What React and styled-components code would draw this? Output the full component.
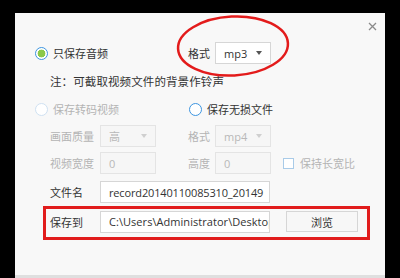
import styled, { createGlobalStyle } from 'styled-components';

const GlobalStyle = createGlobalStyle`
  html, body {
    margin: 0;
    padding: 0;
    background: #000;
    overflow: hidden;
  }
  body {
    font-family: "Noto Sans CJK SC", "Noto Sans", sans-serif;
    font-size: 11px;
    color: #333;
  }
`;

export default function App() {
  return (
    <>
      <GlobalStyle />
      <Stage>
        <Panel>
          <CloseButton>
            <svg width="9" height="9" viewBox="0 0 9 9">
              <path d="M1 1 L8 8 M8 1 L1 8" stroke="#8a8a8a" strokeWidth="1.3" />
            </svg>
          </CloseButton>

          <Ellipse width="116" height="64" viewBox="0 0 116 64">
            <ellipse
              cx="58"
              cy="32"
              rx="55"
              ry="29.5"
              transform="rotate(-3 58 32)"
              fill="none"
              stroke="#e31b1b"
              strokeWidth="2.5"
            />
          </Ellipse>

          <Body>
            <Row $top={0} $h={22}>
              <Lead $w={153}>
                <Radio $checked />
                <RadioLabel>只保存音频</RadioLabel>
              </Lead>
              <Cell $w={27}>格式</Cell>
              <Select $w={56}>
                mp3 <Arrow />
              </Select>
            </Row>

            <SubRow $top={7} $h={20}>
              <Note>注：可截取视频文件的背景作铃声</Note>
            </SubRow>

            <Row $top={8} $h={20}>
              <Lead $w={154}>
                <Radio $disabled />
                <RadioLabel $disabled>保存转码视频</RadioLabel>
              </Lead>
              <Radio />
              <RadioLabel>保存无损文件</RadioLabel>
            </Row>

            <SubRow $top={6} $h={22}>
              <Cell $w={50} $disabled>画面质量</Cell>
              <Select $w={56} $disabled>
                高 <Arrow $disabled />
              </Select>
              <Cell $w={27} $gap={32} $disabled>格式</Cell>
              <Select $w={56} $disabled>
                mp4 <Arrow $disabled />
              </Select>
            </SubRow>

            <SubRow $top={5} $h={22}>
              <Cell $w={50} $disabled>视频宽度</Cell>
              <Input $w={56} $disabled>0</Input>
              <Cell $w={27} $gap={32} $disabled>高度</Cell>
              <Input $w={56} $disabled>0</Input>
              <CheckBox />
              <Cell $disabled>保持长宽比</Cell>
            </SubRow>

            <SubRow $top={7} $h={22}>
              <Cell $w={50}>文件名</Cell>
              <Input $w={170} $spacing={-0.15}>record20140110085310_20149</Input>
            </SubRow>

            <Highlight>
              <Row $top={0} $h={21}>
                <Cell $w={50}>保存到</Cell>
                <Input $w={170} $spacing={0.05}>C:\Users\Administrator\Desktop</Input>
                <Button>浏览</Button>
              </Row>
            </Highlight>
          </Body>

          <Footer />
        </Panel>
      </Stage>
    </>
  );
}

const Stage = styled.div`
  width: 400px;
  height: 278px;
  padding: 13px 0 0 15px;
  box-sizing: border-box;
`;

const Panel = styled.div`
  position: relative;
  width: 370px;
  height: 270px;
  background: #f8f8f8;
  display: flex;
  flex-direction: column;
`;

const CloseButton = styled.div`
  position: absolute;
  top: 9px;
  right: 8px;
  width: 9px;
  height: 9px;
  display: flex;
`;

const Ellipse = styled.svg`
  position: absolute;
  left: 160px;
  top: 1px;
  pointer-events: none;
`;

const Body = styled.div`
  flex: 1;
  display: flex;
  flex-direction: column;
  padding: 29px 0 0 20px;
`;

const Row = styled.div`
  display: flex;
  align-items: center;
  flex: none;
  height: ${({ $h }) => $h}px;
  margin-top: ${({ $top }) => $top}px;
  white-space: nowrap;
`;

const SubRow = styled(Row)`
  padding-left: 15px;
`;

const Lead = styled.div`
  width: ${({ $w }) => $w}px;
  flex: none;
  display: flex;
  align-items: center;
`;

const Radio = styled.span`
  box-sizing: border-box;
  width: 13px;
  height: 13px;
  border-radius: 50%;
  flex: none;
  border: 1.5px solid ${({ $disabled }) => ($disabled ? '#cfe1f2' : '#3d95e0')};
  background: ${({ $checked }) =>
    $checked ? 'radial-gradient(circle, #8bc84a 0 3.6px, #fff 4.2px)' : '#fff'};
`;

const RadioLabel = styled.span`
  margin-left: 5px;
  color: ${({ $disabled }) => ($disabled ? '#b4b4b4' : '#333')};
`;

const Note = styled.span`
  font-size: 11.5px;
  letter-spacing: 0.1px;
`;

const Cell = styled.span`
  flex: none;
  width: ${({ $w }) => ($w ? `${$w}px` : 'auto')};
  margin-left: ${({ $gap }) => $gap || 0}px;
  color: ${({ $disabled }) => ($disabled ? '#b4b4b4' : '#333')};
`;

const Box = styled.div`
  box-sizing: border-box;
  flex: none;
  width: ${({ $w }) => $w}px;
  height: 22px;
  border: 1px solid ${({ $disabled }) => ($disabled ? '#e4e4e4' : '#d6d6d6')};
  background: ${({ $disabled }) => ($disabled ? '#f6f6f6' : '#fff')};
  color: ${({ $disabled }) => ($disabled ? '#b8b8b8' : '#333')};
  font-family: "Open Sans", "Noto Sans CJK SC", sans-serif;
  font-size: 11px;
  letter-spacing: ${({ $spacing }) => $spacing || 0}px;
  display: flex;
  align-items: center;
  overflow: hidden;
  padding-left: 8px;
`;

const Select = styled(Box)`
  gap: 9px;
`;

const Arrow = styled.span`
  width: 0;
  height: 0;
  border-left: 3.5px solid transparent;
  border-right: 3.5px solid transparent;
  border-top: 4px solid ${({ $disabled }) => ($disabled ? '#cfcfcf' : '#555')};
  margin-left: auto;
  margin-right: 8px;
`;

const Input = styled(Box)``;

const CheckBox = styled.span`
  box-sizing: border-box;
  flex: none;
  width: 11px;
  height: 11px;
  margin: 0 6px 0 12px;
  border: 1px solid #a9cbe8;
  background: #fff;
`;

const Highlight = styled.div`
  margin: 3px 0 0 8px;
  width: 327px;
  height: 34px;
  box-sizing: border-box;
  border: 3px solid #e11c1c;
  padding: 2px 0 0 4px;
`;

const Button = styled.div`
  box-sizing: border-box;
  flex: none;
  width: 72px;
  height: 21px;
  margin-left: 16px;
  border: 1px solid #d6d6d6;
  background: #f7f7f7;
  display: flex;
  align-items: center;
  justify-content: center;
  color: #333;
`;

const Footer = styled.div`
  height: 8px;
  flex: none;
  background: #dfdfdf;
`;
